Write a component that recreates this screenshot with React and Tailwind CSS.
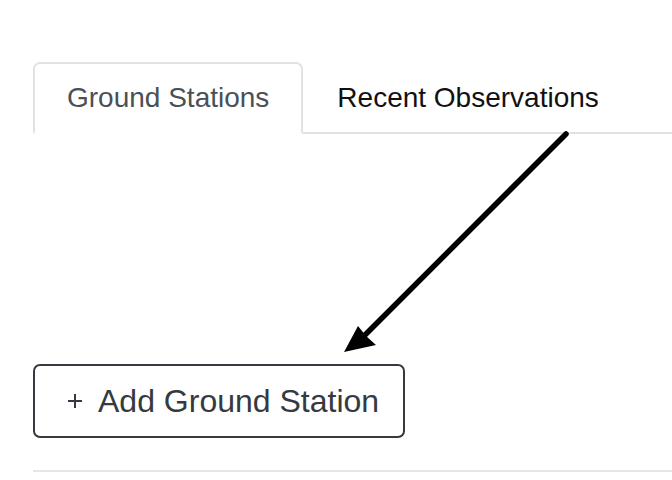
export default function App() {
  return (
    <div className="relative w-[672px] h-[480px] overflow-hidden bg-white pl-[33px] pt-[62px]" style={{ fontFamily: '"Liberation Sans", Arial, sans-serif' }}>
      <ul className="flex border-b-2 border-[#dfe3e7]">
        <li className="-mb-[2px] rounded-t-[7px] border-2 border-[#dfe3e7] border-b-white bg-white px-[32px] py-[13px] text-[28px] leading-[42px] text-[#495057]">
          Ground Stations
        </li>
        <li className="-mb-[2px] border-2 border-transparent pl-[32px] pr-[33px] py-[13px] text-[28px] leading-[42px] text-[#111]">
          Recent Observations
        </li>
      </ul>
      <div className="mt-[230px]">
        <button className="flex items-center rounded-[7px] border-2 border-[#343a40] bg-white py-[11px] pl-[32px] pr-[24px] text-[32px] leading-[48px] text-[#343a40]">
          <svg width="16" height="16" viewBox="0 0 16 16" className="shrink-0">
            <path d="M8 1V15M1 8H15" stroke="#343a40" strokeWidth="2" fill="none" />
          </svg>
          <span className="ml-[15px]">Add Ground Station</span>
        </button>
      </div>
      <div className="mt-[32px] h-[2px] bg-[#e6e6e6]" />
      <svg className="absolute left-0 top-0 pointer-events-none" width="672" height="480" viewBox="0 0 672 480">
        <line x1="566" y1="134" x2="362" y2="338" stroke="#000" strokeWidth="5.5" strokeLinecap="round" />
        <polygon points="344,352 358,326 366,336 376,345" fill="#000" />
      </svg>
    </div>
  );
}
